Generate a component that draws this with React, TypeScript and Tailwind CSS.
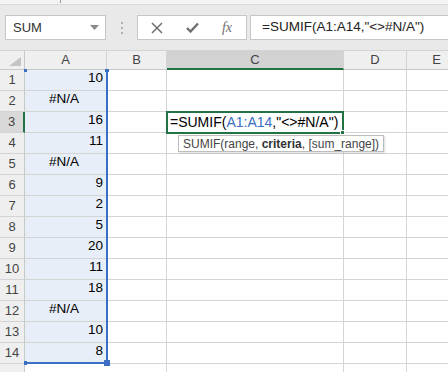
import React from "react";

const rows: { v: string; err?: boolean }[] = [
  { v: "10" },
  { v: "#N/A", err: true },
  { v: "16" },
  { v: "11" },
  { v: "#N/A", err: true },
  { v: "9" },
  { v: "2" },
  { v: "5" },
  { v: "20" },
  { v: "11" },
  { v: "18" },
  { v: "#N/A", err: true },
  { v: "10" },
  { v: "8" },
];

const font = { fontFamily: '"Liberation Sans", Arial, sans-serif' };

const ColHeader = ({ label, w, active }: { label: string; w: string; active?: boolean }) => (
  <div
    className={`${w} h-full shrink-0 flex items-center justify-center border-r border-[#d4d4d4] text-[13px] text-[#444] ${
      active ? "bg-[#d2d2d2] border-b-2 border-b-[#217346]" : "border-b border-b-[#c8c8c8]"
    }`}
  >
    {label}
  </div>
);

export default function App() {
  return (
    <div className="w-[448px] h-[372px] overflow-hidden bg-white flex flex-col" style={font}>
      {/* ribbon edge */}
      <div className="h-[5px] shrink-0 bg-[#f3f3f3] border-b border-[#dadada] relative">
        <div className="absolute left-[60px] top-0 w-px h-[3px] bg-[#999]" />
      </div>

      {/* formula bar */}
      <div className="h-[45px] shrink-0 bg-[#e9e9e9] flex items-start pt-[10px]">
        <div className="ml-[5px] w-[101px] h-[25px] bg-white border border-[#c6c6c6] flex items-center justify-between pl-[7px] pr-[6px]">
          <span className="text-[13px] text-[#333]">SUM</span>
          <svg width="9" height="5" viewBox="0 0 9 5">
            <path d="M0 0 L9 0 L4.5 5 Z" fill="#8a8a8a" />
          </svg>
        </div>
        <div className="w-[31px] h-[25px] flex flex-col items-center justify-center gap-[3px]">
          <div className="w-[2px] h-[2px] bg-[#b0b0b0]" />
          <div className="w-[2px] h-[2px] bg-[#b0b0b0]" />
          <div className="w-[2px] h-[2px] bg-[#b0b0b0]" />
        </div>
        <div className="w-[110px] h-[25px] bg-white border border-[#c6c6c6] flex items-center">
          <div className="w-[38px] flex justify-center">
            <svg width="12" height="12" viewBox="0 0 12 12">
              <path d="M1 1 L11 11 M11 1 L1 11" stroke="#6e6e6e" strokeWidth="1.5" />
            </svg>
          </div>
          <div className="w-[32px] flex justify-center">
            <svg width="13" height="11" viewBox="0 0 13 11">
              <path d="M1 6 L4.5 9.5 L12 1.5" stroke="#6e6e6e" strokeWidth="2.4" fill="none" />
            </svg>
          </div>
          <div className="flex-1 flex justify-center">
            <span
              className="italic text-[14px] text-[#6e6e6e]"
              style={{ fontFamily: '"Liberation Serif", "Times New Roman", serif' }}
            >
              fx
            </span>
          </div>
        </div>
        <div className="ml-[3px] flex-1 h-[25px] bg-white border border-[#c6c6c6] border-r-0 flex items-center pl-[11px]">
          <span className="text-[13.5px] text-[#222]">=SUMIF(A1:A14,"&lt;&gt;#N/A")</span>
        </div>
      </div>

      {/* column headers */}
      <div className="h-[20px] shrink-0 flex bg-[#efefef] border-t border-[#d4d4d4]">
        <div className="w-[25px] h-full shrink-0 border-r border-b border-[#c8c8c8] relative">
          <svg className="absolute right-[3px] bottom-[3px]" width="12" height="9" viewBox="0 0 12 9">
            <path d="M12 0 L12 9 L0 9 Z" fill="#c4c4c4" />
          </svg>
        </div>
        <ColHeader label="A" w="w-[82px]" />
        <ColHeader label="B" w="w-[60px]" />
        <ColHeader label="C" w="w-[177px]" active />
        <ColHeader label="D" w="w-[63px]" />
        <ColHeader label="E" w="w-[60px]" />
      </div>

      {/* grid */}
      <div className="flex-1 flex flex-col relative">
        {rows.map((r, i) => (
          <div key={i} className="h-[21px] shrink-0 flex">
            <div
              className={`w-[25px] h-full shrink-0 flex items-center justify-center text-[13px] text-[#444] border-b border-[#d4d4d4] ${
                i === 2 ? "bg-[#d9d9d9] border-r-2 border-r-[#217346]" : "bg-[#efefef] border-r border-r-[#c8c8c8]"
              }`}
            >
              {i + 1}
            </div>
            <div
              className={`w-[82px] h-full shrink-0 flex items-end pb-[2px] bg-[#e8eef8] border-b border-[#d4d4d4] text-[13.5px] text-black pr-[4px] ${
                r.err ? "justify-center" : "justify-end"
              }`}
            >
              {r.v}
            </div>
            <div className="w-[60px] h-full shrink-0 border-r border-b border-[#d4d4d4]" />
            <div className="w-[177px] h-full shrink-0 border-r border-b border-[#d4d4d4] relative">
              {i === 2 && (
                <>
                  <div className="absolute -left-[1px] -top-[1px] w-[178px] h-[23px] border-2 border-[#217346] flex items-center pl-[2px] z-10 bg-white">
                    <span className="text-[14px] text-black whitespace-nowrap">
                      =SUMIF(<span className="text-[#3a6fc4]">A1:A14</span>,"&lt;&gt;#N/A")
                    </span>
                    <div className="absolute -right-[3px] -bottom-[3px] w-[5px] h-[5px] bg-[#217346] border border-white" />
                  </div>
                  <div className="absolute left-[11px] top-[23px] h-[17px] px-[4px] bg-white border border-[#bdbdbd] shadow-[1px_1px_2px_rgba(0,0,0,0.15)] flex items-center z-20 whitespace-nowrap text-[12px] text-[#444]">
                    <span>
                      SUMIF(range, <b className="font-bold text-[#333]">criteria</b>, [sum_range])
                    </span>
                  </div>
                </>
              )}
            </div>
            <div className="w-[63px] h-full shrink-0 border-r border-b border-[#d4d4d4]" />
            <div className="w-[60px] h-full shrink-0 border-r border-b border-[#d4d4d4]" />
          </div>
        ))}
        <div className="h-[21px] shrink-0 flex">
          <div className="w-[25px] h-full shrink-0 bg-[#efefef] border-r border-[#c8c8c8]" />
          <div className="w-[82px] h-full shrink-0" />
          <div className="w-[60px] h-full shrink-0 border-r border-[#d4d4d4]" />
          <div className="w-[177px] h-full shrink-0 border-r border-[#d4d4d4]" />
          <div className="w-[63px] h-full shrink-0 border-r border-[#d4d4d4]" />
        </div>

        {/* range finder highlight on A1:A14 */}
        <div className="absolute left-[25px] top-0 w-[83px] h-[294px] border-r-2 border-b-2 border-[#3a6fc4] pointer-events-none">
          <div className="absolute -left-[1px] -top-[1px] w-[3px] h-[3px] bg-[#3a6fc4]" />
          <div className="absolute -right-[3px] -top-[1px] w-[4px] h-[3px] bg-[#3a6fc4]" />
          <div className="absolute -left-[1px] -bottom-[3px] w-[3px] h-[4px] bg-[#3a6fc4]" />
          <div className="absolute -right-[4px] -bottom-[4px] w-[6px] h-[6px] bg-[#3a6fc4]" />
        </div>
      </div>
    </div>
  );
}
